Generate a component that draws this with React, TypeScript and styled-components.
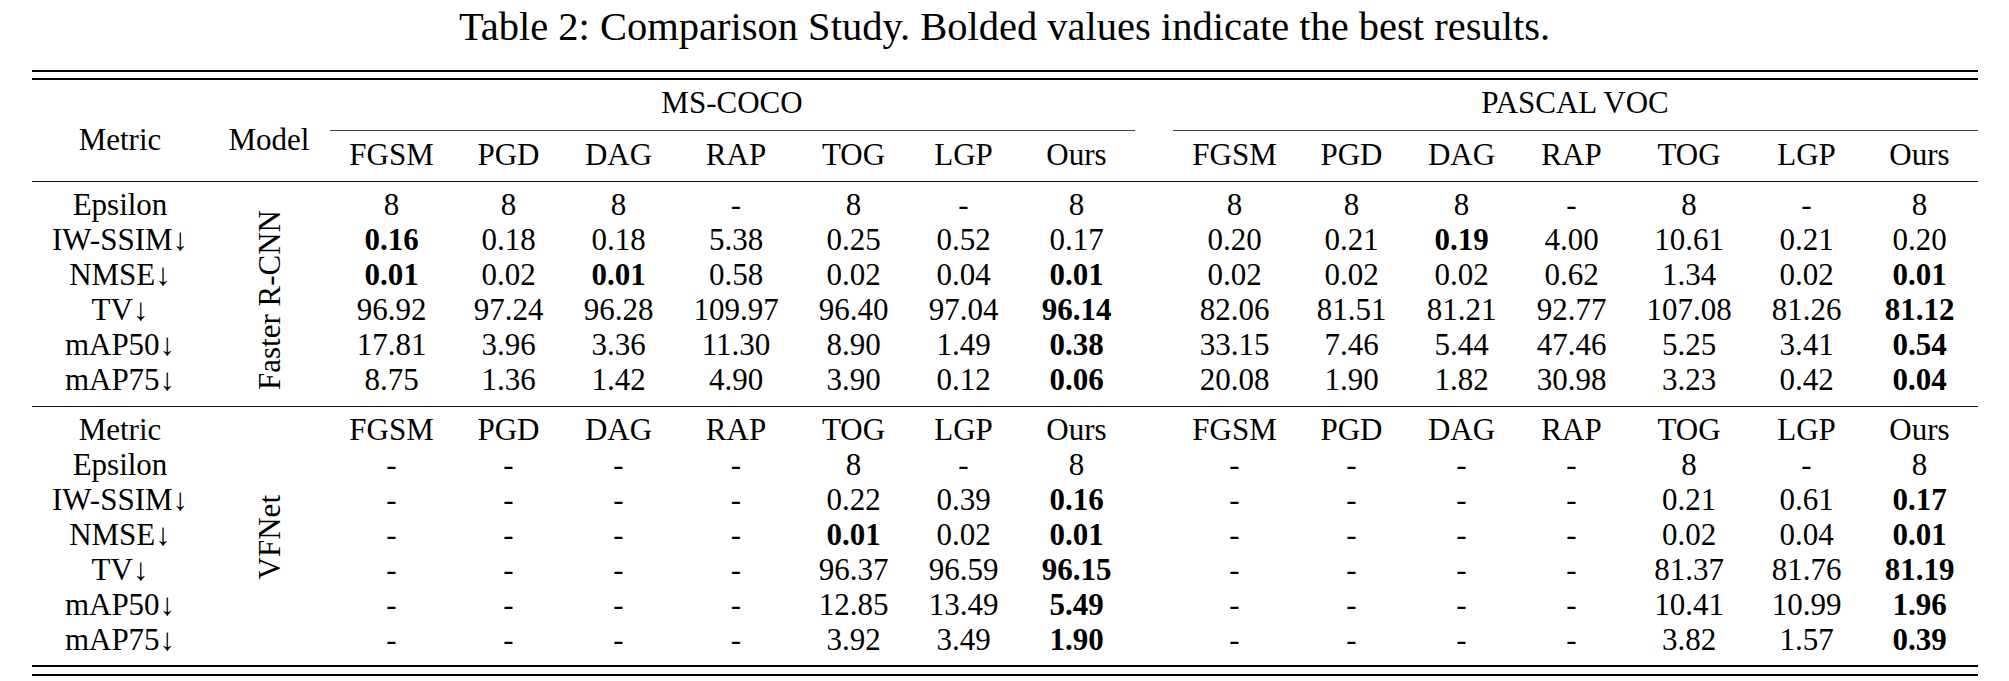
import React from "react";
import styled, { createGlobalStyle } from "styled-components";

const GlobalStyle = createGlobalStyle`
  html, body {
    margin: 0;
    padding: 0;
    background: #fff;
  }
  body {
    font-family: "Liberation Serif", "Times New Roman", serif;
    color: #000;
  }
`;

// widths of the 17 table columns (metric, model, 7 MS-COCO, spacer, 7 PASCAL VOC)
const COLUMNS =
  "177px 121px 124px 110px 110px 125px 110px 110px 116px 38px 124px 110px 110px 110px 125px 110px 116px";

const ATTACKS = ["FGSM", "PGD", "DAG", "RAP", "TOG", "LGP", "Ours"];

const Page = styled.div`
  width: 1946px;
  margin: 0 auto;
  display: flex;
  flex-direction: column;
`;

const Caption = styled.div`
  padding-top: 6px;
  font-size: 40.5px;
  line-height: 42px;
  text-align: center;
  white-space: nowrap;
`;

const DoubleRule = styled.div<{ $top: number }>`
  margin-top: ${(p) => p.$top}px;
  height: 6.6px;
  border-top: 2px solid #000;
  border-bottom: 2px solid #000;
`;

const MidRule = styled.div<{ $top: number }>`
  margin-top: ${(p) => p.$top}px;
  height: 1.5px;
  background: #111;
`;

const HeaderGrid = styled.div`
  display: grid;
  grid-template-columns: ${COLUMNS};
  grid-template-rows: 35px 17px 35px;
  margin-top: 4.5px;
  font-size: 31px;
  line-height: 35px;
`;

const StubHead = styled.div<{ $col: number }>`
  grid-column: ${(p) => p.$col};
  grid-row: 1 / 4;
  padding-top: 37.7px;
  text-align: center;
  white-space: nowrap;
`;

const GroupHead = styled.div<{ $from: number; $to: number }>`
  grid-column: ${(p) => p.$from} / ${(p) => p.$to};
  grid-row: 1;
  text-align: center;
  white-space: nowrap;
`;

const CMidRule = styled.div<{ $from: number; $to: number }>`
  grid-column: ${(p) => p.$from} / ${(p) => p.$to};
  grid-row: 2;
  align-self: start;
  margin-top: 10px;
  height: 1px;
  background: #444;
`;

const AttackHead = styled.div<{ $col: number }>`
  grid-column: ${(p) => p.$col};
  grid-row: 3;
  text-align: center;
  white-space: nowrap;
`;

const BodyGrid = styled.div<{ $top: number }>`
  display: grid;
  grid-template-columns: ${COLUMNS};
  grid-auto-rows: 35px;
  margin-top: ${(p) => p.$top}px;
  font-size: 31px;
  line-height: 35px;
`;

const ModelLabel = styled.div<{ $rows: number; $shift: number }>`
  grid-column: 2;
  grid-row: 1 / span ${(p) => p.$rows};
  justify-self: center;
  align-self: center;
  margin-top: ${(p) => p.$shift}px;
  writing-mode: vertical-rl;
  transform: rotate(180deg);
  white-space: nowrap;
`;

const Cell = styled.div<{ $bold?: boolean }>`
  text-align: center;
  white-space: nowrap;
  font-weight: ${(p) => (p.$bold ? 700 : 400)};
`;

const Spacer = styled.div``;

type Row = { metric: string; coco: string[]; voc: string[] };

// a leading "*" marks a bolded (best) value
const fasterRcnn: Row[] = [
  { metric: "Epsilon", coco: ["8", "8", "8", "-", "8", "-", "8"], voc: ["8", "8", "8", "-", "8", "-", "8"] },
  {
    metric: "IW-SSIM↓",
    coco: ["*0.16", "0.18", "0.18", "5.38", "0.25", "0.52", "0.17"],
    voc: ["0.20", "0.21", "*0.19", "4.00", "10.61", "0.21", "0.20"],
  },
  {
    metric: "NMSE↓",
    coco: ["*0.01", "0.02", "*0.01", "0.58", "0.02", "0.04", "*0.01"],
    voc: ["0.02", "0.02", "0.02", "0.62", "1.34", "0.02", "*0.01"],
  },
  {
    metric: "TV↓",
    coco: ["96.92", "97.24", "96.28", "109.97", "96.40", "97.04", "*96.14"],
    voc: ["82.06", "81.51", "81.21", "92.77", "107.08", "81.26", "*81.12"],
  },
  {
    metric: "mAP50↓",
    coco: ["17.81", "3.96", "3.36", "11.30", "8.90", "1.49", "*0.38"],
    voc: ["33.15", "7.46", "5.44", "47.46", "5.25", "3.41", "*0.54"],
  },
  {
    metric: "mAP75↓",
    coco: ["8.75", "1.36", "1.42", "4.90", "3.90", "0.12", "*0.06"],
    voc: ["20.08", "1.90", "1.82", "30.98", "3.23", "0.42", "*0.04"],
  },
];

const vfnet: Row[] = [
  { metric: "Metric", coco: ATTACKS, voc: ATTACKS },
  { metric: "Epsilon", coco: ["-", "-", "-", "-", "8", "-", "8"], voc: ["-", "-", "-", "-", "8", "-", "8"] },
  {
    metric: "IW-SSIM↓",
    coco: ["-", "-", "-", "-", "0.22", "0.39", "*0.16"],
    voc: ["-", "-", "-", "-", "0.21", "0.61", "*0.17"],
  },
  {
    metric: "NMSE↓",
    coco: ["-", "-", "-", "-", "*0.01", "0.02", "*0.01"],
    voc: ["-", "-", "-", "-", "0.02", "0.04", "*0.01"],
  },
  {
    metric: "TV↓",
    coco: ["-", "-", "-", "-", "96.37", "96.59", "*96.15"],
    voc: ["-", "-", "-", "-", "81.37", "81.76", "*81.19"],
  },
  {
    metric: "mAP50↓",
    coco: ["-", "-", "-", "-", "12.85", "13.49", "*5.49"],
    voc: ["-", "-", "-", "-", "10.41", "10.99", "*1.96"],
  },
  {
    metric: "mAP75↓",
    coco: ["-", "-", "-", "-", "3.92", "3.49", "*1.90"],
    voc: ["-", "-", "-", "-", "3.82", "1.57", "*0.39"],
  },
];

const Value = ({ v }: { v: string }) => {
  const bold = v.startsWith("*");
  return <Cell $bold={bold}>{bold ? v.slice(1) : v}</Cell>;
};

const Block = ({ model, rows, top, shift }: { model: string; rows: Row[]; top: number; shift: number }) => (
  <BodyGrid $top={top}>
    <ModelLabel $rows={rows.length} $shift={shift}>
      {model}
    </ModelLabel>
    {rows.map((r, i) => (
      <React.Fragment key={i}>
        <Cell>{r.metric}</Cell>
        {r.coco.map((v, j) => (
          <Value key={"c" + j} v={v} />
        ))}
        <Spacer />
        {r.voc.map((v, j) => (
          <Value key={"v" + j} v={v} />
        ))}
      </React.Fragment>
    ))}
  </BodyGrid>
);

export default function App() {
  return (
    <>
      <GlobalStyle />
      <Page>
        <Caption>Table 2: Comparison Study. Bolded values indicate the best results.</Caption>
        <DoubleRule $top={21.5} />
        <HeaderGrid>
          <StubHead $col={1}>Metric</StubHead>
          <StubHead $col={2}>Model</StubHead>
          <GroupHead $from={3} $to={10}>MS-COCO</GroupHead>
          <GroupHead $from={11} $to={18}>PASCAL VOC</GroupHead>
          <CMidRule $from={3} $to={10} />
          <CMidRule $from={11} $to={18} />
          {ATTACKS.map((a, i) => (
            <AttackHead key={"c" + a} $col={3 + i}>
              {a}
            </AttackHead>
          ))}
          {ATTACKS.map((a, i) => (
            <AttackHead key={"v" + a} $col={11 + i}>
              {a}
            </AttackHead>
          ))}
        </HeaderGrid>
        <MidRule $top={9} />
        <Block model="Faster R-CNN" rows={fasterRcnn} top={4.5} shift={16} />
        <MidRule $top={9.3} />
        <Block model="VFNet" rows={vfnet} top={4.2} shift={6} />
        <DoubleRule $top={8.5} />
      </Page>
    </>
  );
}
